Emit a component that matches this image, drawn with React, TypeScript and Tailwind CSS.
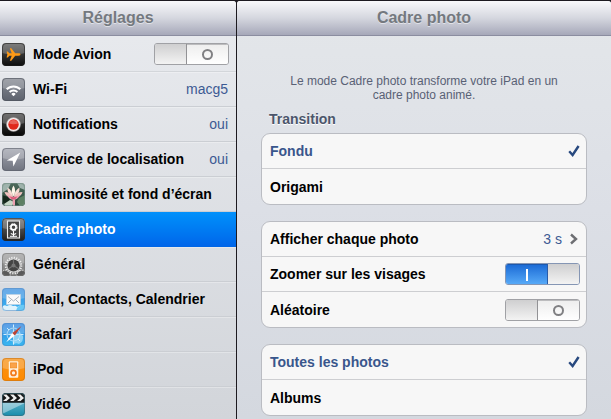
import { useState } from 'react';
import type { ReactNode } from 'react';
import clsx from 'clsx';

interface TileProps {
  id: string;
  from: string;
  to: string;
  stroke?: string;
  gloss?: boolean;
  children: ReactNode;
}

const Tile = ({ id, from, to, stroke = '#555', gloss = true, children }: TileProps) => (
  <svg viewBox="0 0 23 23" className="size-[23px] shrink-0" aria-hidden="true">
    <defs>
      <linearGradient id={`${id}-bg`} x1="0" y1="0" x2="0" y2="1">
        <stop offset="0" stopColor={from} />
        <stop offset="1" stopColor={to} />
      </linearGradient>
      <clipPath id={`${id}-clip`}>
        <rect width="23" height="23" rx="4" />
      </clipPath>
    </defs>
    <g clipPath={`url(#${id}-clip)`}>
      <rect width="23" height="23" fill={`url(#${id}-bg)`} />
      {gloss && <path d="M0 0h23v10q-11.500 3-23 0z" fill="#fff" opacity=".22" />}
      {children}
    </g>
    <rect x=".5" y=".5" width="22" height="22" rx="3.500" fill="none" stroke={stroke} strokeOpacity=".6" />
  </svg>
);

const PlaneIcon = () => (
  <Tile id="plane" from="#5a5a5a" to="#0c0c0c" stroke="#222">
    <path
      d="M18.500 11.500c0-.8-.9-1.200-2-1.200h-3.300L9.300 5.200H7.800l1.900 5.100H7.300L5.800 8.600H4.600l.8 2.900-.8 2.900h1.200l1.500-1.700h2.400l-1.900 5.100h1.500l3.900-5.100h3.300c1.100 0 2-.4 2-1.200z"
      fill="#ff9a16"
    />
  </Tile>
);

const WifiIcon = () => (
  <Tile id="wifi" from="#868a93" to="#5d626d" stroke="#4d525c">
    <g fill="none" stroke="#fff" strokeWidth="2">
      <path d="M4.700 11.200a9.600 9.600 0 0 1 13.600 0" />
      <path d="M7.600 14a5.600 5.600 0 0 1 7.800 0" />
    </g>
    <path d="M9.300 15.900a3.100 3.100 0 0 1 4.400 0l-2.200 2.300z" fill="#fff" />
  </Tile>
);

const NotificationsIcon = () => (
  <Tile id="notif" from="#4c4c4c" to="#050505" stroke="#222">
    <circle cx="11.500" cy="11.500" r="7" fill="#f6eeee" stroke="#999" strokeWidth=".5" />
    <circle cx="11.500" cy="11.500" r="5.200" fill="#e0281d" />
    <path d="M7 10.600a4.600 4.600 0 0 1 9 0q-4.500 1.500-9 0z" fill="#fff" opacity=".28" />
  </Tile>
);

const LocationIcon = () => (
  <Tile id="loc" from="#a2a5b0" to="#70747f" stroke="#5b5f6a">
    <path d="M18.300 4.600 4.800 12.600l5.900.2.700 5.800z" fill="#fff" />
  </Tile>
);

const LotusIcon = () => (
  <Tile id="lotus" from="#4f6b5c" to="#294437" stroke="#6f8a80" gloss={false}>
    <path d="M0 0h9l-3 6-6 4zM15 0h8v7l-5-2z" fill="#9fb3ac" />
    <path d="M0 12l6 2 3 4-4 3H0z" fill="#16281d" />
    <path d="M23 12l-6 3-2 4 3 4h5z" fill="#5d8063" />
    <path d="M2 21l6-4 4 2-2 4H3z" fill="#c5d6c6" />
    <g fill="#f8dcd4">
      <path d="M11.500 2.500q3.300 5 0 11-3.500-6 0-11z" fill="#fff6e9" />
      <path d="M5.500 4.500q5 3 5.500 9-6-2-5.500-9z" />
      <path d="M17.500 4.500q-5 3-5.500 9 6-2 5.500-9z" />
      <path d="M2.500 9q6 0 8.500 5-7 1-8.500-5z" fill="#f0c3bf" />
      <path d="M20.500 9q-6 0-8.500 5 7 1 8.500-5z" fill="#f0c3bf" />
    </g>
    <path d="M5 12q6.500 3.500 13 0-2 4.800-6.500 4.800T5 12z" fill="#ef9db0" />
    <path d="M8 13.500q3.500 1.500 7 0-1 3-3.500 3T8 13.500z" fill="#dd5b79" />
    <path d="M10.500 16.500h2.500v6.500h-2z" fill="#ec9fb0" />
  </Tile>
);

const FrameIcon = () => (
  <Tile id="frame" from="#707070" to="#1e1e1e" stroke="#2c2c2c">
    <rect x="5.500" y="3" width="12" height="17" fill="#444" stroke="#eee" strokeWidth="1.100" />
    <circle cx="11.500" cy="9.200" r="2.600" fill="none" stroke="#fff" strokeWidth="1.600" />
    <circle cx="11.500" cy="9.200" r="3.600" fill="none" stroke="#fff" strokeWidth="1" strokeDasharray="1.700 1.100" />
    <path d="M11.500 12.500v6M8 18.300h7" fill="none" stroke="#fff" strokeWidth="1" />
    <path d="M11.500 17q-2.300.2-3-2 2.300-.2 3 2 .7-2.200 3-2-.7 2.200-3 2" fill="#fff" />
  </Tile>
);

const GearIcon = () => (
  <Tile id="gear" from="#a2a2a2" to="#787878" stroke="#777">
    <circle cx="11.500" cy="12.500" r="7.800" fill="none" stroke="#f0f0f0" strokeWidth="2" strokeDasharray="1.200 1.250" />
    <circle cx="11.500" cy="12.500" r="7" fill="#d6d6d6" />
    <circle cx="11.500" cy="12.500" r="6.100" fill="#444" />
    <path d="M11.500 12.500v-6M11.500 12.500 6 16M11.500 12.500 17 16" stroke="#727272" strokeWidth="1.200" />
    <circle cx="11.500" cy="12.500" r="2" fill="#777" />
    <g fill="#5a5a5a" stroke="#d0d0d0" strokeWidth="1.400" strokeDasharray="1.200 1">
      <circle cx="3" cy="22.500" r="5.200" />
      <circle cx="20" cy="22.500" r="5.200" />
    </g>
  </Tile>
);

const MailIcon = () => (
  <Tile id="mail" from="#3f8fdf" to="#38b5f4" stroke="#5b8fc4">
    <path d="M0 19q2-3 5-1 3-2 6 0 3-1 4 1 4-3 8-1v5H0z" fill="#dff3fd" />
    <path d="M15 20q3-4 8-3v6h-9z" fill="#68c9f5" />
    <rect x="4.500" y="6.500" width="14" height="10" fill="#fafafa" stroke="#c5d2df" strokeWidth=".6" />
    <path d="M6 8.500l5.500 4.500L17 8.500M6 15l3.500-3.500M17 15l-3.500-3.500" fill="none" stroke="#94a0ad" strokeWidth=".8" />
  </Tile>
);

const SafariIcon = () => (
  <Tile id="safari" from="#2f82de" to="#38b9f2" stroke="#4b8bc7">
    <path d="M13 12q5-4 8 1 1 5-4 8-4-2-6 1-1-6 2-10z" fill="#a2dcf7" opacity=".8" />
    <circle cx="11.500" cy="11.500" r="6.500" fill="none" stroke="#bfe4fa" strokeWidth=".8" />
    <path d="M11.500 1.500v3M11.500 18.500v3M1.500 11.500h3M18.500 11.500h3M5 5l2 2M18 18l-2-2" stroke="#d5eefc" strokeWidth="1" />
    <path d="M11.500 4l1 6.500 6.500 1-6.500 1-1 6.500-1-6.500-6.500-1 6.500-1z" fill="#c4e7fb" />
    <path d="M4.200 19.200 10.300 10l2.600 2.600z" fill="#fff" />
    <path d="M19.500 3 10.300 10l2.600 2.600z" fill="#bb4436" />
  </Tile>
);

const IpodIcon = () => (
  <Tile id="ipod" from="#f7931a" to="#ff8a00" stroke="#c67418">
    <rect x="6.800" y="3.300" width="9.500" height="16.500" rx="1" fill="#fff2de" />
    <rect x="8.400" y="4.900" width="6.300" height="5" fill="#fba349" stroke="#ee8920" strokeWidth=".7" />
    <circle cx="11.500" cy="14.900" r="2.500" fill="#fff2de" stroke="#f37a1b" strokeWidth="1.700" />
  </Tile>
);

const VideoIcon = () => (
  <Tile id="video" from="#8ac7da" to="#168cab" stroke="#3c6a78" gloss={false}>
    <path d="M0 10h23L0 21z" fill="#fff" opacity=".4" />
    <rect width="23" height="9.500" fill="#151515" />
    <path d="M1 1.500h3.500L8 5H4.500zM8 1.500h3.500L15 5h-3.500zM15 1.500h3.500L22 5h-3.500zM4.500 5H8L4.500 8H1zM11.500 5H15l-3.500 3H8zM18.500 5H22l-3.500 3H15z" fill="#eee" />
    <path d="M0 9.300h23" stroke="#2f3c40" />
  </Tile>
);

const menu = [
  { label: 'Wi-Fi', value: 'macg5', Icon: WifiIcon },
  { label: 'Notifications', value: 'oui', Icon: NotificationsIcon },
  { label: 'Service de localisation', value: 'oui', Icon: LocationIcon },
  { label: 'Luminosité et fond d’écran', Icon: LotusIcon },
  { label: 'Cadre photo', Icon: FrameIcon },
  { label: 'Général', Icon: GearIcon },
  { label: 'Mail, Contacts, Calendrier', Icon: MailIcon },
  { label: 'Safari', Icon: SafariIcon },
  { label: 'iPod', Icon: IpodIcon },
  { label: 'Vidéo', Icon: VideoIcon },
];

const Switch = ({ id, defaultOn = false }: { id: string; defaultOn?: boolean }) => {
  const [on, setOn] = useState(defaultOn);
  return (
    <label
      htmlFor={id}
      className={clsx(
        'relative flex h-[22px] w-[75px] shrink-0 cursor-pointer overflow-hidden rounded-[3px] border',
        on ? 'border-[#8596b4]' : 'border-[#a0a1a5]',
      )}
    >
      <input
        id={id}
        type="checkbox"
        role="switch"
        checked={on}
        onChange={(e) => setOn(e.target.checked)}
        className="sr-only"
      />
      {on && (
        <span className="flex flex-1 items-center justify-center border-t border-[#1c59ae] bg-linear-to-b from-[#1c6cd6] to-[#56a9f7]">
          <span className="h-3 w-[2px] bg-white" />
        </span>
      )}
      <span
        className={clsx(
          'w-8 bg-linear-to-b from-[#cfcfd0] to-[#f3f3f3]',
          on ? 'border-l border-[#2a5ca8]' : 'border-r border-[#929295]',
        )}
      />
      {!on && (
        <span className="flex flex-1 items-center justify-center border-t border-[#bcbcbe] bg-linear-to-b from-[#eeeeee] to-white">
          <span className="size-[11px] rounded-full border-2 border-[#808083]" />
        </span>
      )}
    </label>
  );
};

const CheckMark = () => (
  <svg viewBox="0 0 12 12" className="invisible size-3 peer-checked:visible" aria-hidden="true">
    <path d="M1.200 6.300 4.600 10 10.600 1" fill="none" stroke="#28497f" strokeWidth="2.400" />
  </svg>
);

const PaneHeader = ({ title }: { title: string }) => (
  <header className="flex h-[35px] shrink-0 items-center justify-center border-b border-[#8b8da0] bg-linear-to-b from-[#f9f9fb] via-[#d5d7df] to-[#a6a8b9]">
    <h1 className="text-[16px] leading-5 font-bold text-[#74797f] [text-shadow:0_1px_0_rgba(255,255,255,0.5)]">
      {title}
    </h1>
  </header>
);

const Group = ({ children }: { children: ReactNode }) => (
  <div className="divide-y divide-[#cdced1] rounded-[9px] border border-[#babcc2] bg-[#f7f7f7]">{children}</div>
);

const RadioGroup = ({ name, options }: { name: string; options: string[] }) => (
  <div role="radiogroup" aria-label={name}>
    <Group>
      {options.map((option, i) => (
        <label
          key={option}
          className="flex h-[35px] cursor-pointer items-center justify-between pr-[6px] pl-2 has-checked:text-[#39568c]"
        >
          {option}
          <input type="radio" name={name} defaultChecked={i === 0} className="peer sr-only" />
          <CheckMark />
        </label>
      ))}
    </Group>
  </div>
);

export default function App() {
  const [selected, setSelected] = useState('Cadre photo');

  return (
    <div className="flex h-screen gap-px bg-[#1d1a20] pt-px font-['Liberation_Sans',Arial,sans-serif] text-[14px] leading-4 font-bold text-black">
      {/* Sidebar */}
      <aside className="flex w-[236px] shrink-0 flex-col overflow-hidden rounded-tr-[3px] bg-linear-to-b from-[#e9ebef] to-[#d2d5da]">
        <PaneHeader title="Réglages" />
        <nav className="min-h-0 flex-1 overflow-y-auto pt-px [scrollbar-width:none]">
          <ul>
            <li className="flex h-[35px] items-center gap-2 border-b border-[#d3d6da] pr-[7px] pl-[2px]">
              <PlaneIcon />
              <label htmlFor="airplane" className="flex-1">
                Mode Avion
              </label>
              <Switch id="airplane" />
            </li>
            {menu.map(({ label, value, Icon }) => (
              <li key={label}>
                <button
                  type="button"
                  onClick={() => setSelected(label)}
                  className={clsx(
                    'flex h-[35px] w-full items-center gap-2 border-b pr-2 pl-[2px] text-left',
                    selected === label
                      ? 'border-[#0066e6] bg-linear-to-b from-[#0391fb] to-[#0066ea] text-white'
                      : 'border-[#cbced3] shadow-[inset_0_1px_0_rgba(255,255,255,0.3)]',
                  )}
                >
                  <Icon />
                  <span className="flex-1 whitespace-nowrap">{label}</span>
                  {value && <span className="font-normal text-[#3c5a93]">{value}</span>}
                </button>
              </li>
            ))}
          </ul>
        </nav>
      </aside>

      {/* Detail pane */}
      <main className="flex min-w-0 flex-1 flex-col overflow-hidden rounded-t-[3px] bg-linear-to-b from-[#e4e7ea] via-[#dcdfe6] to-[#d4d8df]">
        <PaneHeader title="Cadre photo" />
        <div className="min-h-0 flex-1 overflow-y-auto px-6 pt-[38px] [scrollbar-width:none]">
          <p className="px-6 text-center text-[12px] leading-[14px] font-normal text-[#596175]">
            Le mode Cadre photo transforme votre iPad en un cadre photo animé.
          </p>
          <h2 className="mt-[9px] mb-[6px] px-2 text-[#4b566b] [text-shadow:0_1px_0_#fff]">Transition</h2>
          <div className="flex flex-col gap-4">
            <RadioGroup name="Transition" options={['Fondu', 'Origami']} />
            <Group>
              <button type="button" className="flex h-[35px] w-full items-center px-2 text-left">
                <span className="flex-1">Afficher chaque photo</span>
                <span className="mr-2 font-normal text-[#3c5a93]">3 s</span>
                <svg viewBox="0 0 8 12" className="h-3 w-2" aria-hidden="true">
                  <path d="M1 1.500 6 6l-5 4.500" fill="none" stroke="#6d6e72" strokeWidth="2.400" />
                </svg>
              </button>
              <div className="flex h-[35px] items-center justify-between pr-[6px] pl-2">
                <label htmlFor="zoom">Zoomer sur les visages</label>
                <Switch id="zoom" defaultOn />
              </div>
              <div className="flex h-[35px] items-center justify-between pr-[6px] pl-2">
                <label htmlFor="shuffle">Aléatoire</label>
                <Switch id="shuffle" />
              </div>
            </Group>
            <RadioGroup name="Photos" options={['Toutes les photos', 'Albums']} />
          </div>
        </div>
      </main>
    </div>
  );
}
